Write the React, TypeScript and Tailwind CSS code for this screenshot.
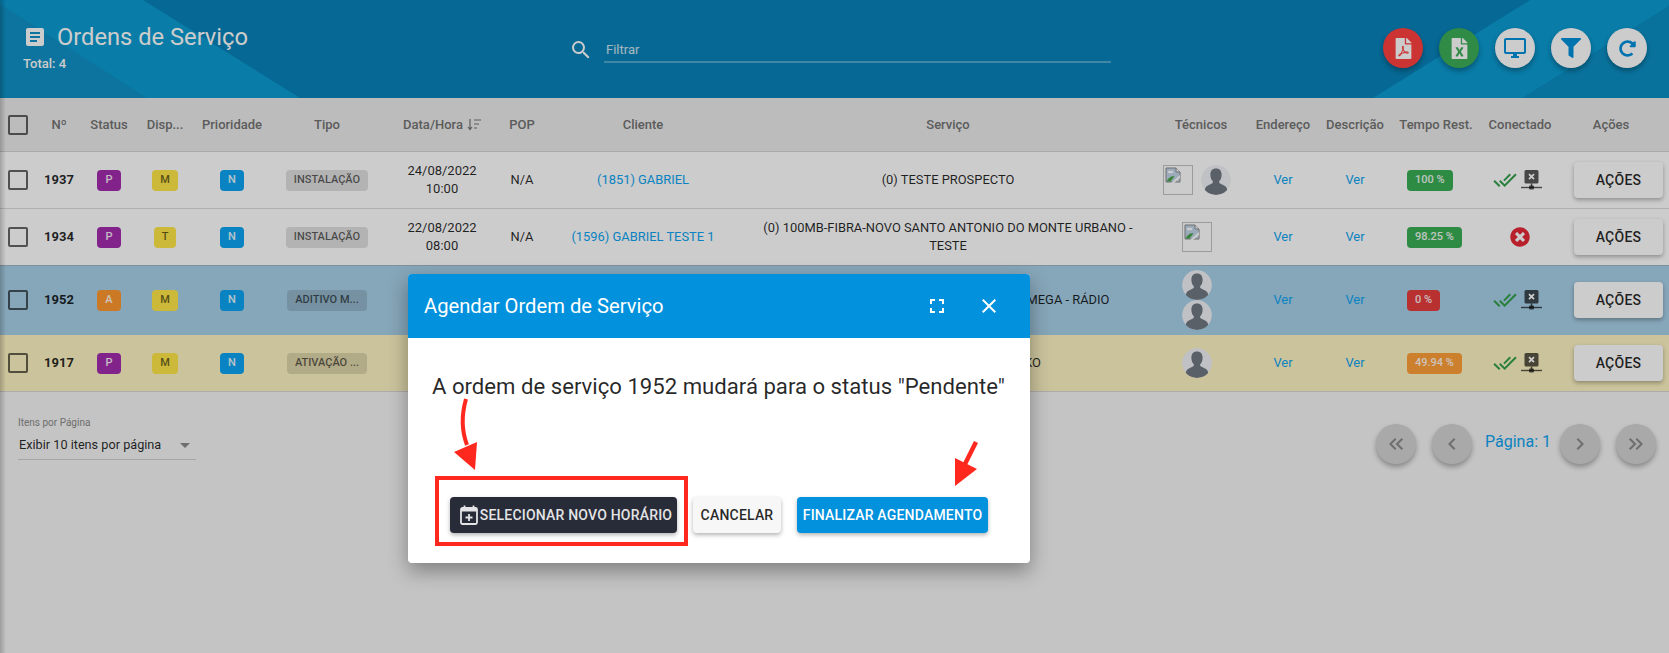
import {
  MdArticle,
  MdChevronLeft,
  MdChevronRight,
  MdClose,
  MdDoneAll,
  MdFullscreen,
  MdKeyboardDoubleArrowLeft,
  MdKeyboardDoubleArrowRight,
  MdOutlineDesktopWindows,
  MdSearch,
} from "react-icons/md";
import { FaFileExcel, FaFilePdf, FaFilter, FaRedoAlt, FaTimesCircle } from "react-icons/fa";

const gridCols =
  "grid grid-cols-[36px_46px_54px_58px_76px_114px_116px_44px_198px_412px_94px_70px_74px_88px_80px_1fr] items-center";

type Row = {
  id: string;
  status: string;
  statusColor: string;
  disp: string;
  tipo: string;
  date?: string[];
  pop?: string;
  cliente?: string;
  servico: string[];
  tecnicos: ("broken" | "avatar")[];
  stacked?: boolean;
  tempo: string;
  tempoColor: string;
  online: boolean;
  rowClass: string;
};

const rows: Row[] = [
  {
    id: "1937",
    status: "P",
    statusColor: "bg-[#a32bae]",
    disp: "M",
    tipo: "INSTALAÇÃO",
    date: ["24/08/2022", "10:00"],
    pop: "N/A",
    cliente: "(1851) GABRIEL",
    servico: ["(0) TESTE PROSPECTO"],
    tecnicos: ["broken", "avatar"],
    tempo: "100 %",
    tempoColor: "bg-[#3aae56]",
    online: true,
    rowClass: "h-[57px] bg-white border-[#dcdcdc]",
  },
  {
    id: "1934",
    status: "P",
    statusColor: "bg-[#a32bae]",
    disp: "T",
    tipo: "INSTALAÇÃO",
    date: ["22/08/2022", "08:00"],
    pop: "N/A",
    cliente: "(1596) GABRIEL TESTE 1",
    servico: ["(0) 100MB-FIBRA-NOVO SANTO ANTONIO DO MONTE URBANO -", "TESTE"],
    tecnicos: ["broken"],
    tempo: "98.25 %",
    tempoColor: "bg-[#3aae56]",
    online: false,
    rowClass: "h-[57px] bg-white border-[#a0b4c4]",
  },
  {
    id: "1952",
    status: "A",
    statusColor: "bg-[#ff982f]",
    disp: "M",
    tipo: "ADITIVO M...",
    servico: ["(0) PLANO RESIDENCIAL EMPRESAS 100 MEGA - RÁDIO"],
    tecnicos: ["avatar", "avatar"],
    stacked: true,
    tempo: "0 %",
    tempoColor: "bg-[#e83c3c]",
    online: true,
    rowClass: "h-[69px] bg-[#a8d0e8] border-[#a8d0e8]",
  },
  {
    id: "1917",
    status: "P",
    statusColor: "bg-[#a32bae]",
    disp: "M",
    tipo: "ATIVAÇÃO ...",
    servico: ["(0) PLANO FIBRA TESTE SUL KO"],
    tecnicos: ["avatar"],
    tempo: "49.94 %",
    tempoColor: "bg-[#ff9f38]",
    online: true,
    rowClass: "h-[57px] bg-[#fef4c3] border-[#d8d8d8]",
  },
];

function BrokenImage() {
  return (
    <div className="h-[30px] w-[30px] border border-[#c4c4c4] p-px">
      <svg width="16" height="16" viewBox="0 0 16 16">
        <path d="M1 1h10l4 4v10H1z" fill="#c3d6ea" stroke="#8a8a8a" strokeWidth="1" />
        <path d="M11 1v4h4" fill="#fff" stroke="#8a8a8a" strokeWidth="1" />
        <ellipse cx="5.5" cy="5" rx="3" ry="1.3" fill="#fff" />
        <path d="M1.5 14.5c2-4 5-6 8-5l-4 5z" fill="#4ca64c" />
        <path d="M6 16l9-8v3l-6 5z" fill="#fff" />
      </svg>
    </div>
  );
}

function Avatar() {
  return (
    <svg width="30" height="30" viewBox="0 0 30 30" className="shrink-0 rounded-full">
      <circle cx="15" cy="15" r="15" fill="#f0f2f6" />
      <path
        d="M15 3.500c3.800 0 5.800 2.700 5.600 6.700-.1 2.600-1 4.500-2.200 5.800-.5.600-.4 1.800.3 2.300 2.200 1.400 5.800 2.200 7 4.600.6 1.300.9 3 1 4.200C24 29 19.800 30 15 30S6 29 3.300 27.100c.1-1.200.4-2.900 1-4.200 1.200-2.400 4.800-3.200 7-4.600.7-.5.8-1.700.3-2.300-1.200-1.300-2.100-3.200-2.200-5.800C9.200 6.200 11.200 3.500 15 3.500z"
        fill="#717882"
      />
    </svg>
  );
}

function NetworkOff() {
  return (
    <svg width="21" height="20" viewBox="0 0 21 20" className="text-black/65">
      <rect x="3.500" y="0" width="14" height="13.500" rx="1.500" fill="currentColor" />
      <path d="M8 4.200l5 5M13 4.200l-5 5" stroke="#fff" strokeWidth="1.800" />
      <rect x="9.800" y="13.500" width="1.500" height="3" fill="currentColor" />
      <rect x="0" y="16.800" width="21" height="1.400" fill="currentColor" />
      <rect x="8" y="15.500" width="5" height="4" rx="1" fill="currentColor" />
    </svg>
  );
}

function CalendarPlus() {
  return (
    <svg width="18" height="20" viewBox="0 0 18 20" fill="none">
      <rect x="1" y="3" width="16" height="16" rx="1.500" stroke="#e4e4e6" strokeWidth="1.800" />
      <path d="M1 3.500h16v3H1z" fill="#e4e4e6" />
      <path d="M4.500 0.500v3M13.500 0.500v3" stroke="#e4e4e6" strokeWidth="1.800" />
      <path d="M9 9v7M5.500 12.500h7" stroke="#e4e4e6" strokeWidth="1.800" />
    </svg>
  );
}

function SortIcon() {
  return (
    <svg width="14" height="13" viewBox="0 0 14 13" fill="none" stroke="#737373" strokeWidth="1.200">
      <path d="M3 1v10M1 9l2 2.500L5 9" />
      <path d="M7 2h7M7 6h5M7 10h3" />
    </svg>
  );
}

function Tag({ className, children }: { className: string; children: string }) {
  return (
    <span className={`inline-flex h-[21px] items-center rounded-[4px] px-2 text-[11px] font-medium ${className}`}>
      {children}
    </span>
  );
}

function CircleButton({ className, children }: { className: string; children: React.ReactNode }) {
  return (
    <button
      type="button"
      className={`flex h-10 w-10 items-center justify-center rounded-full shadow-[0_3px_5px_rgba(0,0,0,0.3)] ${className}`}
    >
      {children}
    </button>
  );
}

function TableRow({ row }: { row: Row }) {
  return (
    <div className={`${gridCols} border-b text-[12.9px] text-black/85 ${row.rowClass}`}>
      <div className="pl-2">
        <div className="h-5 w-5 rounded-[2px] border-2 border-black/60" />
      </div>
      <div className="text-center text-[13px] font-bold">{row.id}</div>
      <div className="text-center">
        <Tag className={`text-white/90 ${row.statusColor}`}>{row.status}</Tag>
      </div>
      <div className="text-center">
        <Tag className="bg-[#ffe748] text-black/60">{row.disp}</Tag>
      </div>
      <div className="text-center">
        <Tag className="bg-[#0ca4f2] text-white/90">N</Tag>
      </div>
      <div className="text-center">
        <Tag className="bg-black/[.12] text-black/60">{row.tipo}</Tag>
      </div>
      <div className="text-center text-[13px] leading-[18px]">
        {row.date?.map((line) => (
          <div key={line}>{line}</div>
        ))}
      </div>
      <div className="text-center">{row.pop}</div>
      <div className="text-center text-[#0ca4f2]">{row.cliente}</div>
      <div className="whitespace-nowrap text-center leading-[18px]">
        {row.servico.map((line) => (
          <div key={line}>{line}</div>
        ))}
      </div>
      <div className={`flex items-center justify-center pr-2 ${row.stacked ? "flex-col" : "gap-2"}`}>
        {row.tecnicos.map((t, i) => (t === "broken" ? <BrokenImage key={i} /> : <Avatar key={i} />))}
      </div>
      <div className="text-center text-[#0ca4f2]">Ver</div>
      <div className="text-center text-[#0ca4f2]">Ver</div>
      <div className="pl-[15px]">
        <Tag className={`text-white/90 ${row.tempoColor}`}>{row.tempo}</Tag>
      </div>
      <div className="flex items-center justify-center">
        {row.online ? (
          <div className="flex items-center gap-1 pr-[5px]">
            <MdDoneAll size={24} className="text-[#33a04c]" />
            <NetworkOff />
          </div>
        ) : (
          <FaTimesCircle size={20} className="text-[#e62838]" />
        )}
      </div>
      <div className="pl-[14px]">
        <button
          type="button"
          className="h-9 w-[89px] rounded-[4px] bg-white text-[14px] font-medium tracking-[0.25px] text-black/85 shadow-[0_2px_4px_rgba(0,0,0,0.3)]"
        >
          AÇÕES
        </button>
      </div>
    </div>
  );
}

const headers = ["Nº", "Status", "Disp...", "Prioridade", "Tipo", "Data/Hora", "POP", "Cliente", "Serviço", "Técnicos", "Endereço", "Descrição", "Tempo Rest.", "Conectado"];

export default function App() {
  return (
    <div className="relative h-[653px] w-full overflow-hidden bg-[#f5f5f5] font-[family-name:Roboto,sans-serif]">
      {/* page header */}
      <header className="relative flex h-[98px] bg-[#0883b9]">
        <svg className="absolute inset-0 h-full w-full" viewBox="0 0 1669 98" preserveAspectRatio="none">
          <path d="M0 0h143l157 98H0z" fill="#0c9bd2" />
          <path d="M0 4l147 94H0z" fill="#0f92c6" />
          <path d="M1530 0h139v6L1523 98h-150z" fill="#0c9bd2" />
          <path d="M1669 6v92h-146z" fill="#0b8fc4" />
        </svg>
        <div className="relative w-[569px] shrink-0 pl-[23px] pt-[21px]">
          <div className="flex h-8 items-center gap-[10px]">
            <MdArticle size={24} className="text-white" />
            <h1 className="text-[23.7px] leading-8 text-white">Ordens de Serviço</h1>
          </div>
          <p className="mt-[3px] text-[13px] font-medium leading-4 text-white">Total: 4</p>
        </div>
        <div className="relative flex gap-[11px] pt-[38px]">
          <MdSearch size={24} className="text-white" />
          <div className="h-[25px] w-[507px] border-b-2 border-white/30 pl-[2px] pt-0.5 text-[13px] text-white/80">Filtrar</div>
        </div>
        <div className="relative ml-auto flex gap-4 pr-[22px] pt-7">
          <CircleButton className="bg-[#ff4040] text-white">
            <FaFilePdf size={21} />
          </CircleButton>
          <CircleButton className="bg-[#3dae59] text-white">
            <FaFileExcel size={21} />
          </CircleButton>
          <CircleButton className="bg-white text-[#0291dd]">
            <MdOutlineDesktopWindows size={24} />
          </CircleButton>
          <CircleButton className="bg-white text-[#0291dd]">
            <FaFilter size={20} />
          </CircleButton>
          <CircleButton className="bg-white text-[#0291dd]">
            <FaRedoAlt size={17} />
          </CircleButton>
        </div>
      </header>

      {/* table */}
      <div className={`${gridCols} h-[54px] border-b border-[#d4d4d4] bg-[#ececec] text-[13px] font-medium text-[#737373]`}>
        <div className="pl-2">
          <div className="h-5 w-5 rounded-[2px] border-2 border-black/60" />
        </div>
        {headers.map((h) => (
          <div key={h} className="flex items-center justify-center gap-1 whitespace-nowrap">
            {h}
            {h === "Data/Hora" && <SortIcon />}
          </div>
        ))}
        <div className="pr-[7px] text-center">Ações</div>
      </div>
      {rows.map((row) => (
        <TableRow key={row.id} row={row} />
      ))}

      {/* footer */}
      <div className="flex items-start justify-between pr-[13px] pt-[25px]">
        <div className="ml-[18px] w-[178px] border-b border-[#d0d0d0]">
          <p className="text-[10px] leading-3 text-[#8a8a8a]">Itens por Página</p>
          <div className="flex items-center justify-between pb-[5px] pl-px pr-[6px] pt-[7px] text-[12.7px] leading-[18px] text-black/85">
            Exibir 10 itens por página
            <span className="h-0 w-0 border-x-[5px] border-t-[5px] border-x-transparent border-t-[#8a8a8a]" />
          </div>
        </div>
        <div className="mt-[7px] flex items-center gap-4">
          <CircleButton className="bg-[#d4d4d4] text-[#8a8a8a]">
            <MdKeyboardDoubleArrowLeft size={24} />
          </CircleButton>
          <CircleButton className="bg-[#d4d4d4] text-[#8a8a8a]">
            <MdChevronLeft size={24} />
          </CircleButton>
          <span className="-ml-[3px] -mr-[7px] -translate-y-[2px] text-[16px] text-[#0ca4f2]">Página: 1</span>
          <CircleButton className="bg-[#d4d4d4] text-[#8a8a8a]">
            <MdChevronRight size={24} />
          </CircleButton>
          <CircleButton className="bg-[#d4d4d4] text-[#8a8a8a]">
            <MdKeyboardDoubleArrowRight size={24} />
          </CircleButton>
        </div>
      </div>

      {/* sidebar edge shadow */}
      <div className="absolute inset-y-0 left-0 w-[6px] bg-gradient-to-r from-black/20 to-transparent" />

      {/* backdrop */}
      <div className="absolute inset-0 bg-black/20" />

      {/* dialog */}
      <div className="absolute left-[408px] top-[274px] h-[289px] w-[622px] overflow-hidden rounded-[4px] bg-white shadow-[0_8px_20px_rgba(0,0,0,0.35)]">
        <div className="flex h-16 items-center justify-between bg-[#0291dd] pl-4 pr-[21px] text-white">
          <h2 className="text-[20.2px]">Agendar Ordem de Serviço</h2>
          <div className="flex gap-3">
            <span className="flex h-10 w-10 items-center justify-center">
              <MdFullscreen size={24} />
            </span>
            <span className="flex h-10 w-10 items-center justify-center">
              <MdClose size={24} />
            </span>
          </div>
        </div>
        <p className="whitespace-nowrap pl-6 pt-[33px] text-[22.15px] leading-[30px] text-black/85">
          A ordem de serviço 1952 mudará para o status "Pendente"
        </p>
        <div className="ml-[42px] mt-[96px] flex h-9 gap-4 text-[14px] font-medium tracking-[0.2px]">
          <button type="button" className="flex w-[227px] items-center justify-center gap-0.5 rounded-[4px] bg-[#282b38] pl-[5px] text-[#e4e4e6] shadow-[0_2px_4px_rgba(0,0,0,0.3)]">
            <CalendarPlus />
            SELECIONAR NOVO HORÁRIO
          </button>
          <button type="button" className="w-[88px] rounded-[4px] bg-[#f7f7f7] text-black/85 shadow-[0_2px_4px_rgba(0,0,0,0.3)]">
            CANCELAR
          </button>
          <button type="button" className="w-[191px] rounded-[4px] bg-[#0291dd] text-white shadow-[0_2px_4px_rgba(0,0,0,0.3)]">
            FINALIZAR AGENDAMENTO
          </button>
        </div>
      </div>

      {/* hand-drawn annotations */}
      <svg className="pointer-events-none absolute inset-0" width="1669" height="653" viewBox="0 0 1669 653" fill="none">
        <rect x="437" y="478" width="249" height="66" stroke="#ff281e" strokeWidth="4" />
        <path d="M466 399c-4 14-5 30 1 46" stroke="#ff281e" strokeWidth="4" />
        <path d="M454 452l23-10-2 28z" fill="#ff281e" />
        <path d="M976 442l-11 22" stroke="#ff281e" strokeWidth="4.500" />
        <path d="M955 458l22 11-22 17z" fill="#ff281e" />
      </svg>
    </div>
  );
}
